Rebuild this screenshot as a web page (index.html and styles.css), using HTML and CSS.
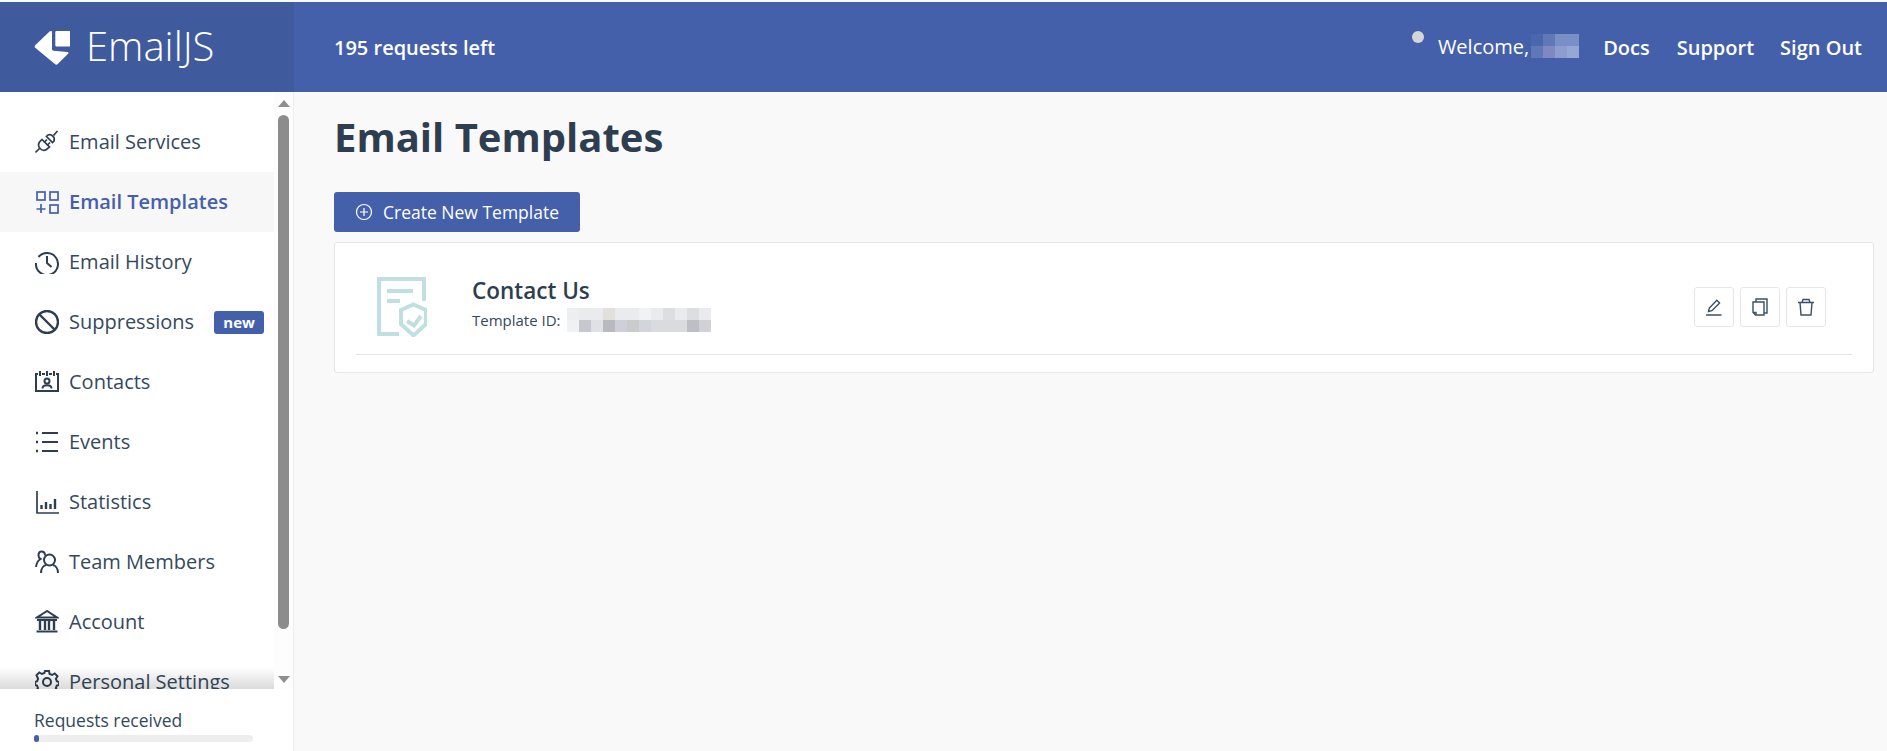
FILE: index.html
```html
<!DOCTYPE html>
<html lang="en">
<head>
<meta charset="utf-8">
<title>Email Templates</title>
<link rel="stylesheet" href="styles.css">
</head>
<body>
<header class="topbar">
  <a class="brand">
    <svg class="brand-logo" viewBox="0 0 38 38"><path fill="#fff" d="M19 2v2l0 16c0 1 .6 1.7 1.6 1.8l14.6 1.4c1.2.1 1.6 1.2.8 2L25 36c-.9.9-2.1.9-3 0L1.3 18.8c-.8-.8-.8-2 0-2.8L16.4 1.6C17.5.6 19 .8 19 2z"/><path fill="#fff" d="M24 1h13c1 0 1.500.5 1.500 1.500V16c0 1-.5 1.500-1.500 1.500H24c-1 0-1.500-.5-1.500-1.500V2.500C22.500 1.500 23 1 24 1z"/></svg>
    <span class="brand-name">EmailJS</span>
  </a>
  <div class="topbar-main">
    <span class="quota">195 requests left</span>
    <nav class="topnav">
      <span class="status-dot"></span>
      <span class="welcome">Welcome,</span>
      <span class="blur-name"><i></i><i></i><i></i><i></i><i></i><i></i><i></i><i></i></span>
      <a class="toplink">Docs</a>
      <a class="toplink">Support</a>
      <a class="toplink">Sign Out</a>
    </nav>
  </div>
</header>
<div class="shell">
  <aside class="sidebar">
    <div class="side-scroll">
      <ul class="menu">
        <li class="menu-item"><svg class="ico" viewBox="0 0 24 24"><g class="ln"><path d="M.5 22.500l4-4M18.500 5.500L22.500 1"/><path d="M11.500 6.500l6 6 1.500-1.500a4.700 4.700 0 0 0-6-6z"/><path d="M7 9.500l7.500 7.500-3 2.500a5.300 5.300 0 0 1-7-7.500z"/><path d="M9 12.500l3-3M12 15.500l3-3"/></g></svg>Email Services</li>
        <li class="menu-item is-active"><svg class="ico" viewBox="0 0 24 24"><g class="ln"><rect x="2" y="2" width="8" height="8"/><rect x="15" y="2" width="8" height="8"/><rect x="15" y="15" width="8" height="8"/><path d="M6 14v9M1.500 19h9"/></g></svg>Email Templates</li>
        <li class="menu-item"><svg class="ico" viewBox="0 0 24 24"><g class="ln ln-mid"><path d="M3.500 7A11 11 0 1 1 1 13"/><path d="M12 6v7l4.500 4"/></g></svg>Email History</li>
        <li class="menu-item"><svg class="ico" viewBox="0 0 24 24"><g class="ln ln-bold"><circle cx="12" cy="12" r="11"/><path d="M4.500 4.500l15 15"/></g></svg>Suppressions<span class="badge">new</span></li>
        <li class="menu-item"><svg class="ico" viewBox="0 0 24 24"><g class="ln ln-mid"><path d="M3 4H1v17h22V4h-2M7 4h3M14 4h3"/><path d="M5 1v5M12 1v5M19 1v5"/><circle cx="12" cy="11" r="2.500"/><path d="M7.500 18.500c0-4.500 9-4.500 9 0"/></g></svg>Contacts</li>
        <li class="menu-item"><svg class="ico" viewBox="0 0 24 24"><g class="ln ln-mid"><path d="M7 3h16M7 12h16M7 21h16"/><path class="ln-bold" d="M1 3h2M1 12h2M1 21h2"/></g></svg>Events</li>
        <li class="menu-item"><svg class="ico" viewBox="0 0 24 24"><g class="ln"><path d="M2 1v22h22"/><path class="ln-bold" d="M6.500 19v-4M11 19v-7M15.500 19v-5M20 19V9"/></g></svg>Statistics</li>
        <li class="menu-item"><svg class="ico" viewBox="0 0 24 24"><g class="ln ln-mid"><circle cx="14.500" cy="10" r="5.500"/><path d="M6 23c0-5 3-7.500 5-8M23 23c0-5-3-7.500-5-8"/><path d="M10 5.500C10 3 8.500 1.500 6.500 1.500S3.500 3 3.500 5.500c0 2 1 3 2 3.500C3 10.500 1.500 13 1 17"/></g></svg>Team Members</li>
        <li class="menu-item"><svg class="ico" viewBox="0 0 24 24"><g class="ln ln-mid"><path d="M12 1L2 7.500h20z"/><path d="M1.500 21.500h21M2 10h20"/><path class="ln-bold" d="M5 11v9M10 11v9M14 11v9M19 11v9"/></g></svg>Account</li>
        <li class="menu-item"><svg class="ico" viewBox="0 0 24 24"><g class="ln ln-mid"><circle cx="12" cy="12" r="4"/><path d="M10 1h4l.6 3 2.500 1 2.600-1.600 2.800 2.800L20.900 8.800l1 2.500L24 12v3l-2.200.6-1 2.500 1.600 2.600-2.800 2.800-2.600-1.600-2.500 1-.6 2.100h-4l-.6-2.100-2.500-1-2.600 1.600-2.800-2.800 1.600-2.600-1-2.500L0 15v-3l2.100-.7 1-2.500L1.500 5.200l2.800-2.800L6.900 4l2.500-1z"/></g></svg>Personal Settings</li>
      </ul>
      <div class="scrollbar">
        <span class="arrow arrow-up"></span>
        <span class="thumb"></span>
        <span class="arrow arrow-down"></span>
      </div>
      <div class="side-shadow"></div>
    </div>
    <div class="usage">
      <div class="usage-label">Requests received</div>
      <div class="track"><div class="fill"></div></div>
      <div class="usage-count">5 / 200</div>
    </div>
  </aside>
  <main class="content">
    <h1 class="title">Email Templates</h1>
    <button class="create-btn"><svg class="plus" viewBox="0 0 18 18"><circle cx="9" cy="9" r="7.500"/><path d="M9 5v8M5 9h8"/></svg>Create New Template</button>
    <section class="card">
      <div class="row">
        <svg class="tpl-icon" viewBox="0 0 50 60"><g class="tpl-ln"><path d="M22 57H2V2h45v22"/><path d="M10 14h26M10 24h13"/><path d="M36.500 27.500L49 33v14L36.500 58.500 24 47V33z"/><path d="M30 44l7 4.500 7-9.500"/></g></svg>
        <div class="tpl-text">
          <div class="tpl-name">Contact Us</div>
          <div class="tpl-id">Template ID:<span class="blur-id"><i></i><i></i><i></i><i></i><i></i><i></i><i></i><i></i><i></i><i></i><i></i><i></i><i></i><i></i><i></i><i></i><i></i><i></i><i></i><i></i><i></i><i></i><i></i><i></i></span></div>
        </div>
        <div class="actions">
          <button class="act"><svg viewBox="0 0 18 18"><path d="M1 17h15.500M3.500 13.500l.8-3.500 7.500-7.700 2.800 2.700-7.700 7.700z"/></svg></button>
          <button class="act"><svg viewBox="0 0 18 18"><path d="M5 4h8v13H4.500L2 14.500V4z"/><path d="M5 4V1h11v14h-3"/><path d="M2.500 14.500h2.500V17"/></svg></button>
          <button class="act"><svg viewBox="0 0 18 18"><path d="M1 4.500h16M3 4.500l1 12.500h10l1-12.500M5 4.500L6 1.500h6l1 3"/></svg></button>
        </div>
      </div>
    </section>
  </main>
</div>
</body>
</html>
```

FILE: styles.css
```css
* { box-sizing: border-box; }
html, body { margin: 0; height: 100%; overflow: hidden; }
body {
  padding-top: 2px;
  background: #f9f9f9;
  font-family: "Open Sans", "Noto Sans", sans-serif;
  color: #2e3e50;
}
.topbar { display: flex; height: 90px; color: #fff; background: #4460aa; }
.brand {
  display: flex; align-items: center; gap: 16px;
  width: 294px; padding-left: 34px;
  background: #3f5a9d;
}
.brand-logo { width: 36px; height: 36px; margin-top: 1px; }
.brand-name { font-size: 40px; font-weight: 300; line-height: 1; margin-top: -2px; }
.topbar-main { flex: 1; display: flex; align-items: center; justify-content: space-between; padding: 0 25px 0 40px; }
.quota { font-size: 20px; font-weight: 600; }
.topnav { display: flex; align-items: center; font-size: 20px; }
.status-dot { width: 12px; height: 12px; border-radius: 50%; background: #d6d6d6; margin: -20px 14px 0 0; }
.welcome { font-weight: 400; margin-top: -2px; margin-right: 2px; }
.blur-name { display: grid; grid-template-columns: repeat(4, 12px); grid-auto-rows: 12px; margin: -2px 24px 0 0; }
.blur-name i:nth-child(1) { background: #4a66ad; }
.blur-name i:nth-child(2) { background: #5f78b8; }
.blur-name i:nth-child(3) { background: #7a8fc6; }
.blur-name i:nth-child(4) { background: #7a8fc6; }
.blur-name i:nth-child(5) { background: #5f78b8; }
.blur-name i:nth-child(6) { background: #7f88c3; }
.blur-name i:nth-child(7) { background: #8e9dd0; }
.blur-name i:nth-child(8) { background: #97a7d4; }
.toplink { font-weight: 600; margin-left: 26px; }
.blur-name + .toplink { margin-left: 0; margin-right: 1px; }

.shell { display: flex; height: 659px; }
.sidebar { width: 294px; display: flex; flex-direction: column; background: #fff; border-right: 1px solid #eeeeee; }
.side-scroll { position: relative; flex: 0 0 597px; display: flex; overflow: hidden; background: #fdfdfd; }
.menu { list-style: none; margin: 0; padding: 20px 0 0; width: 274px; flex: none; background: #fff; }
.menu-item {
  display: flex; align-items: center;
  height: 60px; padding-left: 35px;
  font-size: 20px; line-height: 60px; color: #34495e;
}
.ico { width: 24px; height: 24px; flex: none; margin-right: 10px; }
.ln { fill: none; stroke: #2e3e50; stroke-width: 1.700; }
.ln-mid { stroke-width: 2; }
.ln-bold { stroke-width: 2.400; }
.is-active { background: #f7f7f8; color: #4460aa; font-weight: 600; }
.is-active .ln { stroke: #4460aa; }
.badge {
  width: 50px; height: 23px; margin-left: 20px;
  border-radius: 3px; background: #4460aa; color: #fff;
  font-size: 15px; font-weight: 700; line-height: 22px; text-align: center;
}
.scrollbar { flex: 1; display: flex; flex-direction: column; align-items: center; padding-top: 8px; }
.arrow { width: 0; height: 0; border-left: 6.500px solid transparent; border-right: 6.500px solid transparent; }
.arrow-up { border-bottom: 7px solid #8f8f8f; }
.arrow-down { border-top: 7px solid #8f8f8f; margin-top: 47px; }
.thumb { width: 11px; height: 514px; margin-top: 8px; border-radius: 6px; background: #8c8c8c; }
.side-shadow {
  position: absolute; left: 0; right: 19px; bottom: 0; height: 22px;
  background: linear-gradient(to bottom, rgba(0,0,0,0), rgba(0,0,0,.14));
}
.usage { flex: 1; padding: 19px 0 0 34px; overflow: hidden; position: relative; z-index: 1; background: #fff; }
.usage-label { font-size: 17.500px; line-height: 24px; color: #34495e; }
.track { width: 219px; height: 7px; margin-top: 3px; border-radius: 4px; background: #eeeeee; }
.fill { width: 5px; height: 7px; border-radius: 4px; background: #4460aa; }
.usage-count { font-size: 17.500px; line-height: 24px; margin-top: 4px; color: #34495e; }

.content { flex: 1; padding: 0 13px 0 40px; }
.title { margin: 0; padding-top: 18px; font-size: 40px; line-height: 54px; font-weight: 700; color: #2e3e50; }
.create-btn {
  display: flex; align-items: center; gap: 10px;
  width: 246px; height: 40px; margin: 28px 0 10px; padding: 0 0 0 21px;
  border: 0; border-radius: 3px; background: #4460aa; color: #fff;
  font: 400 17.500px "Open Sans", sans-serif;
}
.plus { width: 18px; height: 18px; fill: none; stroke: #fff; stroke-width: 1.200; }
.card { height: 131px; padding: 0 21px; background: #fff; border: 1px solid #e6e6e6; border-radius: 3px; }
.row { display: flex; align-items: center; height: 112px; padding: 0 26px 0 21px; border-bottom: 1px solid #e4e4e4; }
.tpl-icon { width: 50px; height: 60px; flex: none; margin: 16px 45px 0 0; }
.tpl-ln { fill: none; stroke: #c0dfe1; stroke-width: 4; }
.tpl-text { flex: 1; padding-top: 12px; margin-top: -1px; }
.tpl-name { font-size: 22.500px; font-weight: 600; line-height: 29px; color: #2e3e50; }
.tpl-id { display: flex; align-items: center; margin-top: 3px; font-size: 15px; line-height: 24px; color: #34495e; }
.blur-id { display: grid; grid-template-columns: repeat(12, 12px); grid-auto-rows: 12px; margin-left: 6px; }
.blur-id i { background: #e9ebee; }
.blur-id i:nth-child(4) { background: #e2dfdd; }
.blur-id i:nth-child(9), .blur-id i:nth-child(11) { background: #dcdee1; }
.blur-id i:nth-child(7) { background: #f1f2f4; }
.blur-id i:nth-child(1) { background: #eceef0; }
.blur-id i:nth-child(13) { background: #f0f1f3; }
.blur-id i:nth-child(14) { background: #c6c8cd; }
.blur-id i:nth-child(15) { background: #dfe1e4; }
.blur-id i:nth-child(16) { background: #b8babf; }
.blur-id i:nth-child(17) { background: #cdd0d9; }
.blur-id i:nth-child(18) { background: #c9cbcf; }
.blur-id i:nth-child(19) { background: #d2d5d9; }
.blur-id i:nth-child(20), .blur-id i:nth-child(21), .blur-id i:nth-child(22) { background: #d9dbde; }
.blur-id i:nth-child(23) { background: #bdbfc4; }
.blur-id i:nth-child(24) { background: #cfd1d5; }
.actions { display: flex; gap: 6px; margin-top: 17px; }
.act {
  display: flex; align-items: center; justify-content: center;
  width: 40px; height: 40px; padding: 0;
  background: #fff; border: 1px solid #e6e6e6; border-radius: 3px;
}
.act svg { width: 18px; height: 18px; fill: none; stroke: #3c4f66; stroke-width: 1.400; }
```
